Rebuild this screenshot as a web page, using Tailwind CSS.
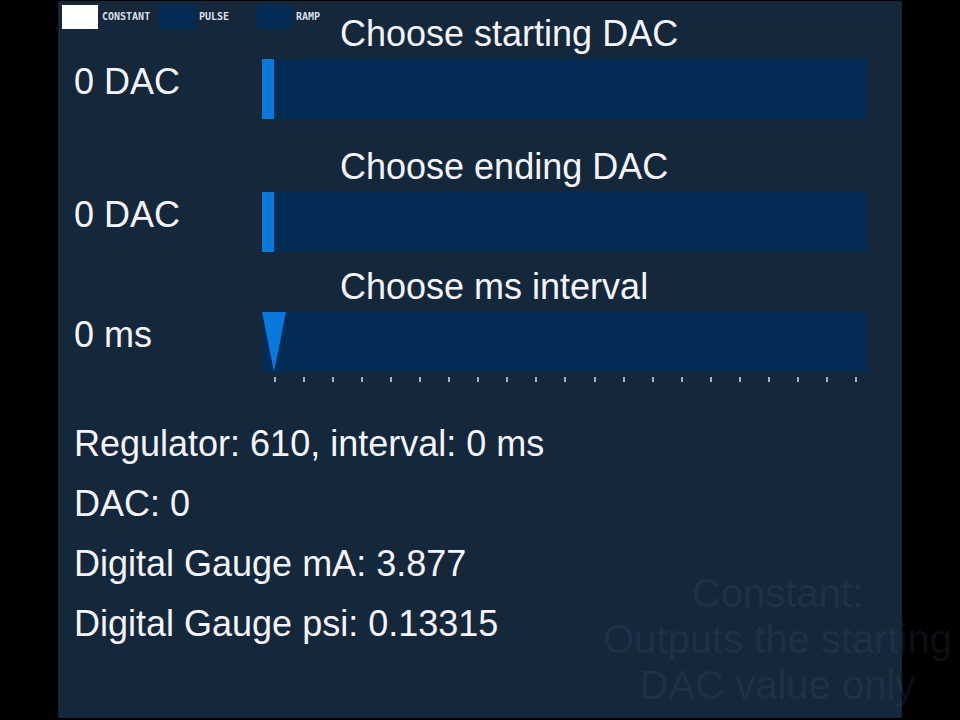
<!DOCTYPE html>
<html lang="en">
<head>
<meta charset="utf-8">
<meta name="viewport" content="width=device-width, initial-scale=1">
<title>DAC control</title>
<script src="https://cdn.jsdelivr.net/npm/@tailwindcss/browser@4"></script>
</head>
<body class="flex min-h-screen bg-black font-['Liberation_Sans',Arial,sans-serif] text-[#f4f4fc]">
<main class="mx-[58px] mt-px mb-0.5 flex-1 border-x border-t border-[#12233a] bg-[#15273b] pr-[34px] pl-[15px] text-[36px] leading-[40px]">

  <!-- Output mode -->
  <fieldset aria-label="Output mode" class="-ml-3 -mb-[15px] flex pt-[3px] font-['DejaVu_Sans_Mono',monospace] text-[10px] font-bold leading-6 text-[#dcdfe8]">
    <label class="flex w-[97px] items-center gap-1"><input type="radio" name="mode" checked class="h-6 w-9 appearance-none bg-[#032c55] checked:bg-white">CONSTANT</label>
    <label class="flex w-[97px] items-center gap-1"><input type="radio" name="mode" class="h-6 w-9 appearance-none bg-[#032c55] checked:bg-white">PULSE</label>
    <label class="flex w-[97px] items-center gap-1"><input type="radio" name="mode" class="h-6 w-9 appearance-none bg-[#032c55] checked:bg-white">RAMP</label>
  </fieldset>

  <section class="grid grid-cols-[188px_1fr] gap-y-[5px]">
    <label for="start" class="col-start-2 ml-[78px]">Choose starting DAC</label>
    <output for="start" class="col-start-1 pt-[3px]">0 DAC</output>
    <input id="start" type="range" min="0" max="4095" value="0" class="h-[60px] w-full appearance-none bg-[#032c55] [&::-webkit-slider-thumb]:h-[60px] [&::-webkit-slider-thumb]:w-3 [&::-webkit-slider-thumb]:appearance-none [&::-webkit-slider-thumb]:bg-[#0b78db]">
  </section>

  <section class="mt-7 grid grid-cols-[188px_1fr] gap-y-[5px]">
    <label for="end" class="col-start-2 ml-[78px]">Choose ending DAC</label>
    <output for="end" class="col-start-1 pt-[3px]">0 DAC</output>
    <input id="end" type="range" min="0" max="4095" value="0" class="h-[60px] w-full appearance-none bg-[#032c55] [&::-webkit-slider-thumb]:h-[60px] [&::-webkit-slider-thumb]:w-3 [&::-webkit-slider-thumb]:appearance-none [&::-webkit-slider-thumb]:bg-[#0b78db]">
  </section>

  <section class="mt-[15px] grid grid-cols-[188px_1fr] gap-y-[5px]">
    <label for="interval" class="col-start-2 ml-[78px]">Choose ms interval</label>
    <output for="interval" class="col-start-1 pt-[3px]">0 ms</output>
    <div>
      <input id="interval" type="range" min="0" max="1000" step="50" value="0" class="block h-[60px] w-full appearance-none bg-[#032c55] [&::-webkit-slider-thumb]:h-[60px] [&::-webkit-slider-thumb]:w-6 [&::-webkit-slider-thumb]:appearance-none [&::-webkit-slider-thumb]:bg-[#0b78db] [&::-webkit-slider-thumb]:[clip-path:polygon(0_0,100%_0,50%_100%)]">
      <div class="mt-[5px] flex justify-between pr-[10px] pl-3" aria-hidden="true">
        <i class="h-[5px] w-0.5 bg-[#a8b0bc]"></i><i class="h-[5px] w-0.5 bg-[#a8b0bc]"></i><i class="h-[5px] w-0.5 bg-[#a8b0bc]"></i><i class="h-[5px] w-0.5 bg-[#a8b0bc]"></i><i class="h-[5px] w-0.5 bg-[#a8b0bc]"></i><i class="h-[5px] w-0.5 bg-[#a8b0bc]"></i><i class="h-[5px] w-0.5 bg-[#a8b0bc]"></i>
        <i class="h-[5px] w-0.5 bg-[#a8b0bc]"></i><i class="h-[5px] w-0.5 bg-[#a8b0bc]"></i><i class="h-[5px] w-0.5 bg-[#a8b0bc]"></i><i class="h-[5px] w-0.5 bg-[#a8b0bc]"></i><i class="h-[5px] w-0.5 bg-[#a8b0bc]"></i><i class="h-[5px] w-0.5 bg-[#a8b0bc]"></i><i class="h-[5px] w-0.5 bg-[#a8b0bc]"></i>
        <i class="h-[5px] w-0.5 bg-[#a8b0bc]"></i><i class="h-[5px] w-0.5 bg-[#a8b0bc]"></i><i class="h-[5px] w-0.5 bg-[#a8b0bc]"></i><i class="h-[5px] w-0.5 bg-[#a8b0bc]"></i><i class="h-[5px] w-0.5 bg-[#a8b0bc]"></i><i class="h-[5px] w-0.5 bg-[#a8b0bc]"></i><i class="h-[5px] w-0.5 bg-[#a8b0bc]"></i>
      </div>
    </div>
  </section>

  <section class="mt-8 leading-[60px]">
    <p>Regulator: 610, interval: 0 ms</p>
    <p>DAC: 0</p>
    <p>Digital Gauge mA: 3.877</p>
    <p>Digital Gauge psi: 0.13315</p>
  </section>
</main>

<!-- Fading caption over the panel and its margin -->
<p class="pointer-events-none absolute right-2 bottom-3 text-center text-[40px] leading-[46px] text-[#7876a0]/12">Constant:<br>Outputs the starting<br>DAC value only</p>
</body>
</html>
